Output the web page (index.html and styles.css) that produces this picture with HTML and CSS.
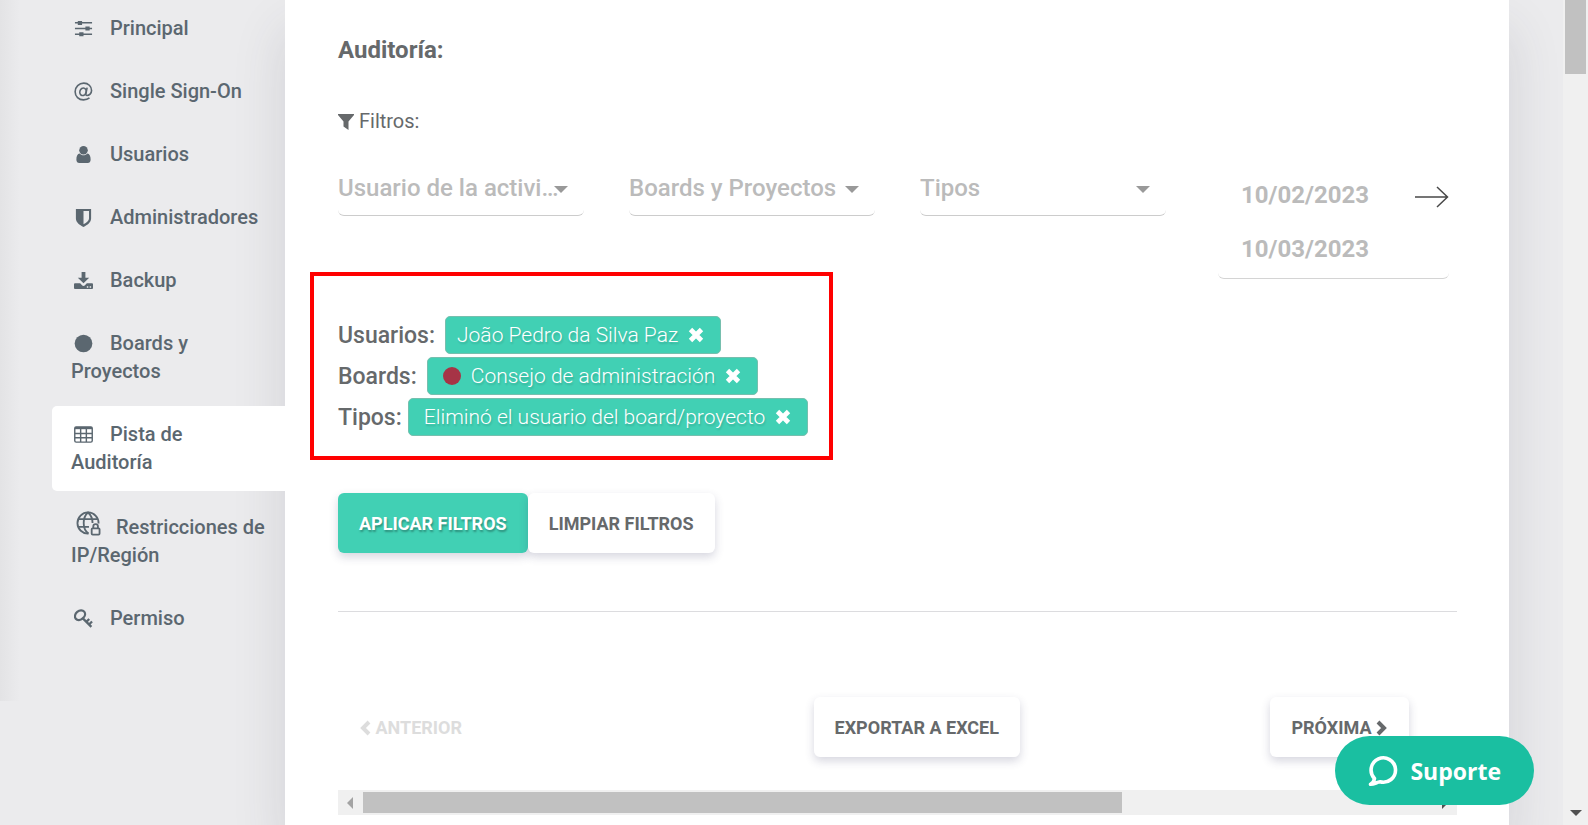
FILE: index.html
```html
<!DOCTYPE html>
<html lang="es">

<head>
    <meta charset="UTF-8">
    <meta name="viewport" content="width=device-width, initial-scale=1.0">
    <title>Pista de Auditoría</title>
    <link rel="stylesheet" href="styles.css">
</head>

<body>
    <div class="page">
        <div class="rail"></div>

        <nav class="sidebar">
            <a href="#" class="nav-item">
                <svg class="nav-icon" viewBox="0 0 20 20"><path d="M1 4h18M1 10h18M1 16h18" stroke="currentColor" stroke-width="1.600" /><path d="M4 2h4.500v4.200H4zM12 7.900h4.500v4.200H12zM5.500 13.900H10v4.200H5.500z" fill="currentColor" /></svg>
                Principal</a>
            <a href="#" class="nav-item">
                <svg class="nav-icon" viewBox="0 0 20 20" fill="none" stroke="currentColor" stroke-width="1.700"><ellipse cx="9.500" cy="10.300" rx="3.300" ry="4" transform="rotate(18 9.500 10.300)" /><path d="M13.800 6l-1.300 6.200c-.3 1.500.3 2 1.200 2 2.200 0 4.800-2.200 4.800-5.200C18.500 4.500 15 1.200 10.300 1.200 5.300 1.200 1.200 5.100 1.200 10.200c0 5 3.800 8.600 8.800 8.600 2.300 0 4.600-.6 6.300-2" /></svg>
                Single Sign-On</a>
            <a href="#" class="nav-item">
                <svg class="nav-icon" viewBox="0 0 20 20" fill="currentColor"><circle cx="10" cy="5.500" r="4.500" /><path d="M6 9c1 1.200 2.500 1.900 4 1.900S13 10.200 14 9c2.500.3 3.500 2.800 3.500 6.500 0 2-1.300 3.500-3 3.500h-9c-1.700 0-3-1.500-3-3.500C2.500 11.800 3.500 9.300 6 9z" /></svg>
                Usuarios</a>
            <a href="#" class="nav-item">
                <svg class="nav-icon" viewBox="0 0 20 20"><path fill="currentColor" fill-rule="evenodd" d="M2 1h16v10c0 4-3.800 6.800-8 9-4.200-2.200-8-5-8-9zM10 3.200v13.900c3.500-1.900 5.800-3.700 5.800-6.100V3.200z" /></svg>
                Administradores</a>
            <a href="#" class="nav-item">
                <svg class="nav-icon" viewBox="0 0 20 20"><path fill="currentColor" fill-rule="evenodd" d="M8 1h4v6h4l-6 6-6-6h4zM1 13h5.500l2.200 2.200c.8.700 1.800.7 2.600 0l2.200-2.200H19c.6 0 1 .4 1 1v4c0 .6-.4 1-1 1H1c-.6 0-1-.4-1-1v-4c0-.6.400-1 1-1zM13.500 16v1.500H15V16zM16.500 16v1.500H18V16z" /></svg>
                Backup</a>
            <a href="#" class="nav-item">
                <svg class="nav-icon" viewBox="0 0 20 20"><circle cx="10" cy="10" r="9.300" fill="currentColor" /></svg>
                Boards y Proyectos</a>
            <a href="#" class="nav-item active">
                <svg class="nav-icon" viewBox="0 0 20 20" fill="none" stroke="currentColor" stroke-width="1.500"><rect x=".8" y="2" width="18.400" height="16" rx="1.500" /><path d="M1 3.200h18" stroke-width="2.400" /><path d="M1 9h18M1 13.500h18M7 3v15M13 3v15" /></svg>
                Pista de Auditoría</a>
            <a href="#" class="nav-item">
                <svg class="nav-icon nav-icon-large" viewBox="0 0 26 26" fill="none" stroke="currentColor" stroke-width="1.900"><path d="M13 23.500A11 11 0 1 1 23.500 13" /><path d="M13 23.500C9.500 21 8 17 8 12.500S9.500 4 12.500 1.500C15.500 4 17.200 8 17.200 12.500M2.500 8.500h20M2.500 16.500h11" /><rect x="16.300" y="18" width="8.200" height="6.500" rx="1" /><path d="M18 18v-2c0-3.200 4.800-3.200 4.800 0v2" /></svg>
                Restricciones de IP/Región</a>
            <a href="#" class="nav-item">
                <svg class="nav-icon" viewBox="0 0 20 20" fill="none" stroke="currentColor" stroke-width="2.400"><ellipse cx="6.300" cy="6.500" rx="4.500" ry="5.800" transform="rotate(50 6.300 6.500)" /><path d="M8.800 9.300l9.500 9.500M13 13.500l3-3M15.800 16.300l3.200-3.200" /></svg>
                Permiso</a>
        </nav>

        <main class="card">
            <h1 class="title">Auditoría:</h1>
            <p class="filters-label">
                <svg class="funnel" viewBox="0 0 16 16"><path fill="currentColor" d="M0 0h16v1L10.500 7.500V16l-5-3.500v-5L0 1z" /></svg>
                Filtros:
            </p>

            <form class="filters">
                <label class="select-box">
                    <select aria-label="Usuario de la actividad">
                        <option>Usuario de la actividad</option>
                    </select>
                </label>
                <label class="select-box">
                    <select aria-label="Boards y Proyectos">
                        <option>Boards y Proyectos</option>
                    </select>
                </label>
                <label class="select-box">
                    <select aria-label="Tipos">
                        <option>Tipos</option>
                    </select>
                </label>
                <div class="date-range">
                    <input type="text" class="date-input" aria-label="Fecha inicial" value="10/02/2023">
                    <svg class="date-arrow" viewBox="0 0 34 22" fill="none" stroke="#484848" stroke-width="1.500"><path d="M0 11h32M22 1l10.500 10L22 21" /></svg>
                    <input type="text" class="date-input" aria-label="Fecha final" value="10/03/2023">
                </div>
            </form>

            <section class="selected">
                <div class="selected-row">
                    <span class="selected-label label-wide">Usuarios:</span>
                    <button class="chip">João Pedro da Silva Paz
                        <svg class="chip-close" viewBox="0 0 16 16"><path d="M2.500 2.500l11 11M13.500 2.500l-11 11" stroke="currentColor" stroke-width="4.800" /></svg>
                    </button>
                </div>
                <div class="selected-row">
                    <span class="selected-label label-wide">Boards:</span>
                    <button class="chip chip-indent"><span class="dot"></span>Consejo de administración
                        <svg class="chip-close" viewBox="0 0 16 16"><path d="M2.500 2.500l11 11M13.500 2.500l-11 11" stroke="currentColor" stroke-width="4.800" /></svg>
                    </button>
                </div>
                <div class="selected-row">
                    <span class="selected-label">Tipos:</span>
                    <button class="chip chip-indent">Eliminó el usuario del board/proyecto
                        <svg class="chip-close" viewBox="0 0 16 16"><path d="M2.500 2.500l11 11M13.500 2.500l-11 11" stroke="currentColor" stroke-width="4.800" /></svg>
                    </button>
                </div>
            </section>

            <div class="actions">
                <button class="btn btn-primary">APLICAR FILTROS</button>
                <button class="btn">LIMPIAR FILTROS</button>
            </div>

            <hr class="divider">

            <div class="pager">
                <button class="btn btn-disabled" disabled>
                    <svg class="chevron" viewBox="0 0 12 16"><path d="M10 2L4 8l6 6" fill="none" stroke="currentColor" stroke-width="4" /></svg>
                    ANTERIOR
                </button>
                <button class="btn">EXPORTAR A EXCEL</button>
                <button class="btn">PRÓXIMA
                    <svg class="chevron" viewBox="0 0 12 16"><path d="M2 2l6 6-6 6" fill="none" stroke="currentColor" stroke-width="4" /></svg>
                </button>
            </div>

            <div class="h-scroll">
                <span class="arrow arrow-left"></span>
                <div class="h-track">
                    <div class="h-thumb"></div>
                </div>
                <span class="arrow arrow-right"></span>
            </div>
        </main>

        <div class="v-scroll">
            <div class="v-thumb"></div>
            <span class="arrow arrow-down"></span>
        </div>
    </div>

    <button class="support">
        <svg class="support-icon" viewBox="0 0 30 32"><path d="M6.500 23.500A12.200 12.200 0 1 1 12 26.800C9 27 6 29.500 2.500 29.300 5 28 6 26.500 6.500 23.500z" fill="none" stroke="currentColor" stroke-width="3.600" stroke-linejoin="round" /></svg>
        Suporte
    </button>
</body>

</html>
```

FILE: styles.css
```css
* {
    box-sizing: border-box;
}

body {
    margin: 0;
    font-family: Roboto, "Liberation Sans", sans-serif;
    background-color: #ebebed;
    color: #66696b;
}

button,
input,
select {
    font-family: inherit;
}

.page {
    display: flex;
    min-height: 100vh;
    overflow: hidden;
}

.rail {
    width: 52px;
    background: linear-gradient(to right, #e3e3e5, #ebebed 20px) no-repeat;
    background-size: 100% 85%;
}

/* Sidebar */
.sidebar {
    width: 233px;
    flex-shrink: 0;
}

.nav-item {
    display: block;
    margin-bottom: 6px;
    padding: 14px 18px 15px 19px;
    border-radius: 5px 0 0 5px;
    color: #5b6770;
    font-size: 20px;
    font-weight: 500;
    line-height: 28px;
    text-decoration: none;
}

.nav-item.active {
    position: relative;
    z-index: 1;
    background-color: #fff;
}

.nav-icon {
    width: 19px;
    height: 19px;
    margin: 0 12px 0 3px;
    vertical-align: -3px;
}

.nav-icon-large {
    width: 25px;
    height: 25px;
    margin: 0 10px 0 5px;
    vertical-align: -2px;
}

/* Main panel */
.card {
    flex: 1;
    min-width: 0;
    margin-right: 54px;
    padding: 36px 52px 10px 53px;
    background-color: #fff;
    box-shadow: 0 30px 50px rgba(60, 60, 80, 0.14);
}

.title {
    margin: 0;
    font-size: 24px;
    font-weight: 700;
    line-height: 28px;
}

.filters-label {
    margin: 43px 0 30px;
    font-size: 20px;
    line-height: 28px;
}

.funnel {
    width: 16px;
    height: 16px;
    vertical-align: -2px;
}

.filters {
    display: grid;
    grid-template-columns: repeat(4, 1fr);
    align-items: start;
    gap: 45px;
}

.select-box {
    position: relative;
    display: block;
}

.select-box::after {
    content: '';
    position: absolute;
    top: 21px;
    right: 16px;
    border: 7px solid transparent;
    border-top-color: #999;
    border-bottom: 0;
    pointer-events: none;
}

.select-box select {
    appearance: none;
    width: 100%;
    height: 51px;
    padding: 0 22px 4px 0;
    border: 0;
    border-bottom: 1px solid #ccc;
    border-radius: 6px;
    background-color: transparent;
    color: #bbb;
    font-size: 24px;
    font-weight: 500;
    text-overflow: ellipsis;
}

.date-range {
    display: flex;
    flex-wrap: wrap;
    align-items: center;
    margin: 0 8px 0 7px;
    padding: 3px 0 2px;
    border-bottom: 1px solid #d4d4d4;
    border-radius: 6px;
}

.date-input {
    width: 80%;
    height: 54px;
    padding: 0 23px;
    border: 0;
    background-color: transparent;
    color: #bbb;
    font-size: 24px;
    font-weight: 700;
}

.date-arrow {
    width: 34px;
    height: 22px;
    margin: 4px 0 0 auto;
}

/* Applied filters */
.selected {
    width: fit-content;
    margin: -7px 0 33px -28px;
    padding: 40px 21px 20px 24px;
    border: 4px solid #f00;
}

.selected-row {
    display: flex;
    align-items: center;
    margin-bottom: 3px;
}

.selected-row:last-child {
    margin-bottom: 0;
}

.selected-label {
    margin-right: 6px;
    font-size: 23px;
    font-weight: 500;
}

.label-wide {
    margin-right: 10px;
}

.chip {
    display: flex;
    align-items: center;
    height: 38px;
    padding: 0 16px 0 11px;
    border: 1px solid #76bfae;
    border-radius: 5px;
    background-color: #41d0b4;
    color: #fff;
    font-size: 21px;
    font-weight: 300;
    text-shadow: 1px 2px 2px rgba(0, 0, 0, 0.15);
    cursor: pointer;
}

.chip-indent {
    padding-left: 15px;
}

.chip-close {
    width: 16px;
    height: 16px;
    margin-left: 10px;
}

.dot {
    width: 18px;
    height: 18px;
    margin-right: 10px;
    border-radius: 50%;
    background-color: #a63446;
}

/* Buttons */
.btn {
    height: 60px;
    padding: 0 21px;
    border: 0;
    border-radius: 6px;
    background-color: #fff;
    box-shadow: 0 4px 10px rgba(50, 50, 93, 0.2);
    color: #66696b;
    font-size: 18px;
    font-weight: 700;
    white-space: nowrap;
    cursor: pointer;
}

.btn-primary {
    background-color: #41d0b4;
    color: #fff;
    text-shadow: 1px 2px 2px rgba(0, 0, 0, 0.3);
}

.btn-disabled {
    box-shadow: none;
    color: #ddd;
}

.actions {
    display: flex;
}

.divider {
    margin: 58px 0 85px;
    border: 0;
    border-top: 1px solid #dcdcdf;
}

.pager {
    display: grid;
    grid-template-columns: 51fr 49fr 20fr;
    justify-items: start;
    margin-bottom: 33px;
}

.chevron {
    width: 12px;
    height: 16px;
    vertical-align: -2px;
}

/* Scrollbars */
.h-scroll {
    display: flex;
    align-items: center;
    height: 25px;
    background-color: #f0f0f0;
}

.h-track {
    flex: 1;
    margin: 0 10px;
}

.h-thumb {
    width: 71%;
    height: 21px;
    background-color: #c1c1c1;
}

.v-scroll {
    display: flex;
    flex-direction: column;
    align-items: center;
    justify-content: space-between;
    width: 25px;
    padding-bottom: 9px;
    background-color: #f0f0f0;
}

.v-thumb {
    width: 21px;
    height: 74px;
    background-color: #c1c1c1;
}

.arrow {
    border: 6px solid transparent;
}

.arrow-left {
    margin-left: 9px;
    border-left: 0;
    border-right-color: #a3a3a3;
}

.arrow-right {
    margin-right: 9px;
    border-right: 0;
    border-left-color: #505050;
}

.arrow-down {
    border-bottom: 0;
    border-top-color: #505050;
}

/* Support chat */
.support {
    position: fixed;
    right: 54px;
    bottom: 20px;
    z-index: 2;
    display: flex;
    align-items: center;
    gap: 12px;
    height: 69px;
    padding: 0 33px;
    border: 0;
    border-radius: 35px;
    background-color: #1abfa1;
    color: #fff;
    font-family: "Open Sans", "Noto Sans", sans-serif;
    font-size: 23px;
    font-weight: 700;
    cursor: pointer;
}

.support-icon {
    width: 30px;
    height: 32px;
}
```
